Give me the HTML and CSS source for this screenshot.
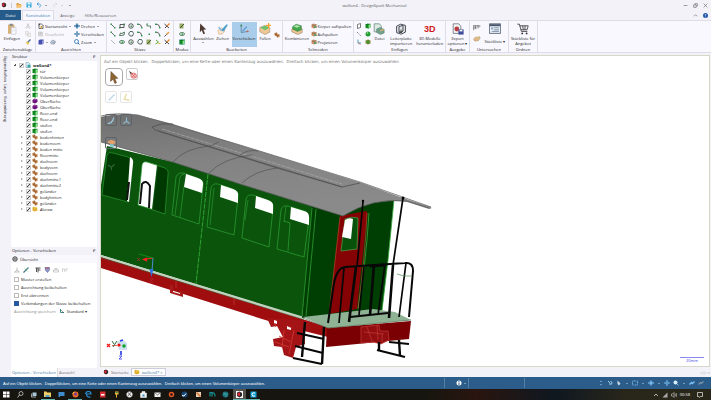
FILE: index.html
```html
<!DOCTYPE html>
<html lang="de">
<head>
<meta charset="utf-8">
<title>waGon4 - DesignSpark Mechanical</title>
<link rel="stylesheet" href="styles.css">
</head>
<body>
<svg class="defs" aria-hidden="true">
  <symbol id="line" viewBox="0 0 12 12"><path d="M2 2L10 10" stroke="#2d4a3d" stroke-width="1.6"/><path d="M1 1h3v3H1zM8 8h3v3H8z" fill="#3c8d4c"/></symbol>
  <symbol id="rect" viewBox="0 0 12 12"><path d="M2 3h8v6H2z" fill="none" stroke="#333" stroke-width="1.6"/><path d="M0 8h3v3H0zM9 1h3v3H9z" fill="#3c8d4c"/></symbol>
  <symbol id="circ" viewBox="0 0 12 12"><circle cx="6" cy="6" r="4.5" fill="none" stroke="#333" stroke-width="1.6"/><path d="M5 5h3v3H5z" fill="#3c9d4c"/></symbol>
  <symbol id="hex" viewBox="0 0 12 12"><path d="M4 1h5l2 4-2 5H4L1 6z" fill="none" stroke="#2d4a3d" stroke-width="1.6"/></symbol>
  <symbol id="arc" viewBox="0 0 12 12"><path d="M1 3q8-2 8 7" fill="none" stroke="#333" stroke-width="1.6"/><path d="M0 1h3v3H0zM8 8h3v3H8z" fill="#3c9d4c"/></symbol>
  <symbol id="step" viewBox="0 0 12 12"><path d="M2 2v4h7v5" fill="none" stroke="#3b6d4b" stroke-width="1.6"/><path d="M1 1h3v2H1z" fill="#3c9d4c"/></symbol>
  <symbol id="cut" viewBox="0 0 12 12"><path d="M1 2l9 8M10 2L2 10" stroke="#333" stroke-width="1.8"/><path d="M6 6l5-5" stroke="#e98322" stroke-width="2.4"/></symbol>
  <symbol id="dot" viewBox="0 0 12 12"><path d="M5 5h3v3H5z" fill="#2f9c48"/></symbol>
  <symbol id="pen" viewBox="0 0 12 12"><path d="M1 11L9 3" stroke="#50555c" stroke-width="2"/><path d="M5 7l5-5" stroke="#ef9a3a" stroke-width="3"/></symbol>
  <symbol id="ell" viewBox="0 0 12 12"><ellipse cx="6" cy="6" rx="5" ry="3" fill="none" stroke="#2e6b3e" stroke-width="1.6"/><path d="M5 5h3v3H5z" fill="#3c9d4c"/></symbol>
  <symbol id="poly" viewBox="0 0 12 12"><path d="M1 9l2-5 3 1 5-3-1 6-6 1z" fill="none" stroke="#2e5b3e" stroke-width="1.6"/></symbol>
  <symbol id="sketch" viewBox="0 0 12 12"><path d="M1 1h8v10H1z" fill="#9cae65"/><path d="M2 10l8-8" stroke="#415938" stroke-width="2"/></symbol>
  <symbol id="tri" viewBox="0 0 12 12"><path d="M2 2l5 4-6 4" fill="none" stroke="#5da53a" stroke-width="2"/><path d="M7 9h4" stroke="#e2b12d" stroke-width="2"/></symbol>
  <symbol id="cube" viewBox="0 0 12 12"><path d="M1 3l4-2 6 1v7l-4 2-6-1z" fill="#118c20"/><path d="M1 3l6 1 4-2M7 4v7" fill="none" stroke="#075d10"/><path d="M7 4l4-2v7l-4 2z" fill="#8ee394"/></symbol>
  <symbol id="surface" viewBox="0 0 12 12"><path d="M1 4l4-3 6 2v5l-5 3-5-2z" fill="#6c1279"/><path d="M3 4l4-1 2 2" fill="none" stroke="#ce87d8"/></symbol>
  <symbol id="part" viewBox="0 0 12 12"><path d="M1 2l4-1 3 3 3 1v5l-4 1-3-3-3-1z" fill="#c98a52"/><path d="M1 4l6 3 4-1M5 1l-1 6M7 7v4" fill="none" stroke="#7a4a24"/></symbol>
  <symbol id="folder" viewBox="0 0 12 12"><path d="M1 3l3-2 1 1h5l1 7-6 2-4-2z" fill="#e0b030"/><path d="M4 4l6-1" stroke="#fff0a8"/></symbol>
  <symbol id="doc" viewBox="0 0 12 12"><path d="M2 1h5l3 3v7H2z" fill="#e7f2f8" stroke="#4b8297"/><path d="M5 6l3-1 3 2v4H5z" fill="#37a4a8"/></symbol>
  <symbol id="home" viewBox="0 0 12 12"><path d="M1 6l5-5 5 5M2 5v6h8V5" fill="none" stroke="#444" stroke-width="1.5"/><path d="M5 6h3v5H5z" fill="#d5a43c"/><path d="M1 1h3v3H1z" fill="#444"/></symbol>
  <symbol id="lens" viewBox="0 0 12 12"><circle cx="5" cy="5" r="4" fill="#eef8ff" stroke="#286aa8" stroke-width="1.6"/><path d="M8 8l3 3" stroke="#286aa8" stroke-width="2"/></symbol>
  <symbol id="pan" viewBox="0 0 12 12"><path d="M6 1v10M1 6h10" stroke="currentColor" stroke-width="1.6"/><path d="M6 0l2 3H4zM6 12l2-3H4zM0 6l3-2v4zM12 6L9 4v4z" fill="currentColor"/></symbol>
  <symbol id="orbit" viewBox="0 0 12 12"><path d="M6 0v12M1 5q5-3 10 0v2q-5 3-10 0z" fill="none" stroke="currentColor" stroke-width="1.5"/><circle cx="6" cy="6" r="2.5" fill="currentColor"/></symbol>
  <symbol id="page" viewBox="0 0 12 12"><path d="M1 2h8v8H1z" fill="#ddd" stroke="#bbb"/><path d="M3 4h4M3 6h4" stroke="#aaa"/></symbol>
  <symbol id="view" viewBox="0 0 12 12"><path d="M1 3l3-2h7v8l-3 2H1z" fill="#454fae"/><path d="M8 4v7l3-2V1z" fill="#8f9cd8"/></symbol>
  <symbol id="iso" viewBox="0 0 12 12"><path d="M1 7l4-5 6 3-2 5H3z" fill="#cbd2dc" stroke="#616b78"/><path d="M4 6l3 2 2-3" fill="none" stroke="#3d79b4"/></symbol>
  <symbol id="paste" viewBox="0 0 24 30"><path d="M2 4h16v23H2z" fill="#d9b27a"/><path d="M6 2h8v5H6z" fill="#80868c"/><path d="M10 11h12v17H10z" fill="#fafcff" stroke="#99a5b8"/><path d="M12 16h8M12 20h8" stroke="#c4ccd6"/></symbol>
  <symbol id="scissors" viewBox="0 0 12 12"><path d="M4 1l4 7M8 1L4 8" stroke="#bbb" stroke-width="1.4"/><circle cx="3" cy="9" r="1.6" fill="none" stroke="#bbb"/><circle cx="9" cy="9" r="1.6" fill="none" stroke="#bbb"/></symbol>
  <symbol id="copy" viewBox="0 0 12 12"><path d="M1 1h6v7H1zM5 4h6v7H5z" fill="#eee" stroke="#ccc"/></symbol>
  <symbol id="brush" viewBox="0 0 12 12"><path d="M1 7l5-3 3 4-3 4z" fill="#e8cc58"/><path d="M6 6l5-5" stroke="#4c6a98" stroke-width="2.4"/></symbol>
  <symbol id="cursor" viewBox="0 0 24 30"><path d="M5 1l15 15-7 1 4 9-4 2-4-10-5 5z" fill="#4d3a30"/></symbol>
  <symbol id="pull" viewBox="0 0 30 30"><path d="M2 18l10-6 8 8-7 8H4z" fill="#f4e3cf" stroke="#d28d56"/><path d="M10 18L24 3l3 2-10 16z" fill="#4f9fc9"/><path d="M4 10l8 9" stroke="#8dbbd5" stroke-width="4"/></symbol>
  <symbol id="move" viewBox="0 0 30 30"><path d="M8 24V5M8 24l16-3" stroke="#59869d" stroke-width="2"/><path d="M8 2l3 6H5z" fill="#3f8c5f"/><path d="M28 21l-6-3v6z" fill="#ca5c55"/><path d="M11 21l11-12" stroke="#5b93cf" stroke-width="3"/></symbol>
  <symbol id="fill" viewBox="0 0 30 30"><path d="M2 11l13-5 12 6v11l-12 6-13-7z" fill="#edc896" stroke="#80613c"/><path d="M3 11l12-4 11 5-11 6z" fill="#6cc36f"/><path d="M24 0v13M18 6h12" stroke="#f2a12c" stroke-width="3"/></symbol>
  <symbol id="combine" viewBox="0 0 30 30"><path d="M2 15l10-5 16 5v9l-11 5-15-7z" fill="#ecc594" stroke="#6c5237"/><path d="M4 9l9-6 13 4v10l-10 4L4 15z" fill="#43a84c" stroke="#2a6034"/><path d="M6 9l8-4 9 3-8 4z" fill="#b0e4ae"/></symbol>
  <symbol id="split" viewBox="0 0 12 12"><path d="M1 3l4-2 6 2v6l-5 2-5-2z" fill="#d18a65"/><path d="M2 4l5 1 4-2" stroke="#3f7559" fill="none"/><path d="M6 6h5v4H6z" fill="#679969"/></symbol>
  <symbol id="file" viewBox="0 0 30 30"><path d="M3 2h13l5 6v14H3z" fill="#dcebe1" stroke="#6c8b85" stroke-width="2"/><path d="M9 15l9-4 10 5v9l-9 4-10-5z" fill="#73a08b" stroke="#476b61"/><path d="M18 20l9-4" stroke="#dfb372" stroke-width="3"/></symbol>
  <symbol id="board" viewBox="0 0 30 30"><path d="M4 8l10-5 12 3v17l-11 5-11-4zM10 9l10-3v14l-10 4z" fill="#e7e8ea" stroke="#3f4650" stroke-width="2.4"/><path d="M15 16v9M15 25l-4-4M15 25l4-4" stroke="#333" stroke-width="2"/></symbol>
  <symbol id="export" viewBox="0 0 30 30"><path d="M3 2h14l5 6v18H3z" fill="#f2f5f5" stroke="#6a7278" stroke-width="2"/><circle cx="12" cy="15" r="6" fill="#bb3e40"/><path d="M16 16h13v13H16z" fill="#414c99"/><path d="M19 17h7v4h-7z" fill="#fff"/></symbol>
  <symbol id="measure" viewBox="0 0 24 18"><path d="M2 2v15M8 2v12M15 2v10M2 4h20M2 10h8" stroke="#555" stroke-width="2" fill="none"/><path d="M16 7h6" stroke="#888" stroke-width="2"/></symbol>
  <symbol id="hand" viewBox="0 0 24 18"><path d="M2 10l7-6 4 2 5-4 4 5-5 8-8 2-6-2z" fill="#e0bc86" stroke="#90724c"/></symbol>
  <symbol id="list" viewBox="0 0 30 30"><path d="M1 2h28v24H1z" fill="#eceff4" stroke="#46556b" stroke-width="2"/><path d="M2 3h26v5H2z" fill="#46556b"/><path d="M5 11h6v5H5z" fill="#86a9cf"/><path d="M13 12h12M13 17h12M7 21h18" stroke="#667d9a" stroke-width="2"/></symbol>
  <symbol id="cart" viewBox="0 0 30 30"><path d="M1 3h5l5 18h15M7 7h21l-3 10H10M14 7l2 10M20 7v10" fill="none" stroke="#3d3d3d" stroke-width="2.2"/><circle cx="13" cy="26" r="2.4" fill="#333"/><circle cx="24" cy="26" r="2.4" fill="#333"/></symbol>
  <symbol id="logo" viewBox="0 0 14 14"><path d="M0 0h14v14H0z" fill="#fff"/><path d="M2 3l5-2 5 3v6l-5 3-5-3z" fill="#30262a"/><path d="M3 4l5-1v7l-5-1z" fill="#d7283a"/></symbol>
  <symbol id="gear" viewBox="0 0 12 12"><circle cx="6" cy="6" r="4.6" fill="#bbb" stroke="#444" stroke-width="1.6"/><path d="M4 3v6M8 3v6M3 6h6" stroke="#555"/></symbol>
</svg>

<header class="titlebar">
  <nav class="quick" aria-label="Schnellzugriff">
    <svg class="i"><use href="#logo"/></svg><span class="bar"></span>
    <button aria-label="Öffnen"><svg class="i" viewBox="0 0 12 12"><path d="M1 2h4l1 2h4v7H1z" fill="#e2a047"/><path d="M3 6h9l-2 5H1z" fill="#f6c674"/></svg></button>
    <button aria-label="Speichern"><svg class="i" viewBox="0 0 12 12"><path d="M1 1h10v10H1z" fill="#31a8d8"/><path d="M3 1h6v4H3zM4 7h4v4H4z" fill="#def3fb"/></svg></button>
    <button aria-label="Rückgängig"><svg class="i" viewBox="0 0 12 12"><path d="M2 4h5q5 2 0 7M5 1L2 4l3 3" fill="none" stroke="#4a9fdc" stroke-width="1.8"/></svg><i class="drop"></i></button>
    <button aria-label="Wiederholen"><svg class="i" viewBox="0 0 12 12"><path d="M10 4H5q-5 2 0 7M7 1l3 3-3 3" fill="none" stroke="#d8d9de" stroke-width="1.6"/></svg><i class="drop pale"></i></button>
    <i class="drop"></i>
  </nav>
  <h1>waGon4 - DesignSpark Mechanical</h1>
  <div class="window">
    <button aria-label="Minimieren"><svg class="w" viewBox="0 0 8 8"><path d="M1 4h6" stroke="#666"/></svg></button>
    <button aria-label="Wiederherstellen"><svg class="w" viewBox="0 0 8 8"><path d="M1 3h4v4H1zM3 3V1h4v4H5" fill="none" stroke="#666"/></svg></button>
    <button aria-label="Schließen"><svg class="w" viewBox="0 0 8 8"><path d="M1 1l6 6M7 1L1 7" stroke="#666"/></svg></button>
  </div>
</header>
<nav class="tabs">
  <button class="file">Datei</button><button class="active">Konstruktion</button><button>Anzeige</button><button>Hilfe/Ressourcen</button>
  <span class="help"><svg class="w" viewBox="0 0 8 8"><path d="M1 5l3-2 3 2" fill="none" stroke="#777"/></svg><svg class="w" viewBox="0 0 8 8"><circle cx="4" cy="4" r="4" fill="#2456a8"/><path d="M3 3q1-2 2 0l-1 1v1M4 6v1" fill="none" stroke="#fff"/></svg></span>
</nav>

<section class="ribbon">
  <div class="group">
    <div class="tools">
      <button class="big"><svg class="b"><use href="#paste"/></svg>Einfügen</button>
      <div class="stack"><button aria-label="Ausschneiden"><svg class="i"><use href="#scissors"/></svg></button><button aria-label="Kopieren"><svg class="i"><use href="#copy"/></svg></button><button aria-label="Format übertragen"><svg class="i"><use href="#brush"/></svg></button></div>
    </div><h2>Zwischenablage</h2>
  </div>
  <div class="group">
    <div class="tools pair">
      <div class="stack"><button><svg class="i"><use href="#home"/></svg>Startansicht<i class="drop"></i></button><button class="off"><svg class="i"><use href="#page"/></svg>Draufsicht</button><button aria-label="Ansichten"><svg class="i"><use href="#view"/></svg><i class="drop"></i><svg class="i"><use href="#iso"/></svg></button></div>
      <div class="stack blue"><button><svg class="i"><use href="#orbit"/></svg><span>Drehen</span><i class="drop"></i></button><button><svg class="i"><use href="#pan"/></svg><span>Verschieben</span></button><button><svg class="i"><use href="#lens"/></svg><span>Zoom</span><i class="drop"></i></button></div>
    </div><h2>Ausrichten</h2>
  </div>
  <div class="group">
    <div class="tools sketch">
      <button aria-label="Linie"><svg class="i"><use href="#line"/></svg></button><button aria-label="Rechteck"><svg class="i"><use href="#rect"/></svg></button><button aria-label="Kreis"><svg class="i"><use href="#circ"/></svg></button><button aria-label="Bogen"><svg class="i"><use href="#arc"/></svg></button><button aria-label="Spline"><svg class="i"><use href="#step"/></svg></button><button aria-label="Ecke"><svg class="i"><use href="#arc"/></svg></button><button aria-label="Trimmen"><svg class="i"><use href="#cut"/></svg></button>
      <button aria-label="Tangente"><svg class="i"><use href="#line"/></svg></button><button aria-label="Dreipunkt-Rechteck"><svg class="i"><use href="#poly"/></svg></button><button aria-label="Vieleck"><svg class="i"><use href="#hex"/></svg></button><button aria-label="Tangentenbogen"><svg class="i"><use href="#arc"/></svg></button><button aria-label="Punkt"><svg class="i"><use href="#dot"/></svg></button><button aria-label="Versatz"><svg class="i"><use href="#arc"/></svg></button><button aria-label="Teilen"><svg class="i"><use href="#pen"/></svg></button>
      <button aria-label="Hilfslinie"><svg class="i" viewBox="0 0 12 12"><path d="M2 2l8 8" stroke="#444" stroke-dasharray="2 1"/></svg></button><button aria-label="Ellipse"><svg class="i"><use href="#ell"/></svg></button><button aria-label="Dreipunktkreis"><svg class="i"><use href="#circ"/></svg></button><button aria-label="Schwenkbogen"><svg class="i"><use href="#hex"/></svg></button><button aria-label="Flächenkurve"><svg class="i"><use href="#sketch"/></svg></button><button aria-label="Projizieren"><svg class="i"><use href="#tri"/></svg></button><button aria-label="Biegen"><svg class="i"><use href="#cut"/></svg></button>
    </div><h2>Skizze</h2>
  </div>
  <div class="group">
    <div class="tools"><div class="stack"><button aria-label="Skizzenmodus"><svg class="i"><use href="#sketch"/></svg></button><button aria-label="Schnittmodus"><svg class="i"><use href="#ell"/></svg></button><button class="on" aria-label="3D-Modus"><svg class="i"><use href="#cube"/></svg></button></div></div><h2>Modus</h2>
  </div>
  <div class="group">
    <div class="tools edit">
      <button class="big"><svg class="b"><use href="#cursor"/></svg>Auswählen<i class="drop"></i></button><button class="big"><svg class="b"><use href="#pull"/></svg>Ziehen</button><button class="big on"><svg class="b"><use href="#move"/></svg>Verschieben</button><button class="big"><svg class="b"><use href="#fill"/></svg>Füllen</button><button class="mid" aria-label="Verrundung"><svg class="i"><use href="#part"/></svg></button>
    </div><h2>Bearbeiten</h2>
  </div>
  <div class="group">
    <div class="tools">
      <button class="big"><svg class="b"><use href="#combine"/></svg>Kombinieren</button>
      <div class="stack"><button><svg class="i"><use href="#split"/></svg>Körper aufspalten</button><button><svg class="i"><use href="#split"/></svg>Aufspalten</button><button><svg class="i"><use href="#split"/></svg>Projizieren</button></div>
    </div><h2>Schneiden</h2>
  </div>
  <div class="group">
    <div class="tools">
      <div class="stack"><button aria-label="Ebene"><svg class="i" viewBox="0 0 12 12"><path d="M3 3l6-2v8l-6 2z" fill="#fff" stroke="#444" stroke-width="1.4"/></svg></button><button aria-label="Achse"><svg class="i" viewBox="0 0 12 12"><path d="M2 2l8 8" stroke="#333" stroke-dasharray="3 1"/></svg></button><button aria-label="Ursprung"><svg class="i" viewBox="0 0 12 12"><path d="M4 1v7h6" fill="none" stroke="#2685a2" stroke-width="1.6"/><path d="M4 8l5 3" stroke="#c33"/></svg></button></div>
      <div class="stack"><button aria-label="Zylinder"><svg class="i"><use href="#cube"/></svg></button><button aria-label="Kugel"><svg class="i" viewBox="0 0 12 12"><circle cx="6" cy="6" r="5" fill="#239a34"/><circle cx="5" cy="4" r="1.6" fill="#b5ebb0"/></svg></button><button aria-label="Lochmuster"><svg class="i" viewBox="0 0 12 12"><path d="M1 3l5-2 5 2v6l-5 2-5-2z" fill="#82893b"/><circle cx="6" cy="6" r="2.6" fill="#2e9a38"/></svg></button></div>
      <button class="big"><svg class="b"><use href="#file"/></svg>Datei</button><button class="big"><svg class="b"><use href="#board"/></svg>Leiterplatte importieren</button><button class="big"><b class="three">3D</b>3D-Modelle herunterladen</button>
    </div><h2>Einfügen</h2>
  </div>
  <div class="group"><div class="tools"><button class="big"><svg class="b"><use href="#export"/></svg>Export optionen ▾</button></div><h2>Ausgabe</h2></div>
  <div class="group"><div class="tools">
    <div class="stack two"><button aria-label="Messen"><svg class="m"><use href="#measure"/></svg></button><button aria-label="Masse"><svg class="m"><use href="#hand"/></svg></button></div>
    <button class="big low"><svg class="b"><use href="#list"/></svg>Stückliste ▾</button>
  </div><h2>Untersuchen</h2></div>
  <div class="group"><div class="tools"><button class="big"><svg class="b"><use href="#cart"/></svg>Stückliste für Angebot</button></div><h2>Ordnen</h2></div>
</section>

<main class="main">
  <aside class="rail"><span>Eigenschaften</span><span>Layer</span><span>Kurzanleitung</span></aside>
  <aside class="side">
    <section class="structure">
      <h3>Struktur<span>₽</span></h3>
      <ul class="tree">
        <li class="root"><i class="open"></i><label><input type="checkbox" checked><svg class="t"><use href="#doc"/></svg>waGon4*</label></li>
        <li><label><input type="checkbox" checked><svg class="t"><use href="#cube"/></svg>tür</label></li>
        <li><label><input type="checkbox" checked><svg class="t"><use href="#cube"/></svg>Volumenkörper</label></li>
        <li><label><input type="checkbox" checked><svg class="t"><use href="#cube"/></svg>Volumenkörper</label></li>
        <li><label><input type="checkbox" checked><svg class="t"><use href="#cube"/></svg>Volumenkörper</label></li>
        <li><label><input type="checkbox" checked><svg class="t"><use href="#cube"/></svg>Volumenkörper</label></li>
        <li><label><input type="checkbox" checked><svg class="t"><use href="#surface"/></svg>Oberfläche</label></li>
        <li><label><input type="checkbox" checked><svg class="t"><use href="#surface"/></svg>Oberfläche</label></li>
        <li><label><input type="checkbox" checked><svg class="t"><use href="#cube"/></svg>floor-end</label></li>
        <li><label><input type="checkbox" checked><svg class="t"><use href="#cube"/></svg>floor-end</label></li>
        <li><label><input type="checkbox" checked><svg class="t"><use href="#cube"/></svg>stufen</label></li>
        <li><label><input type="checkbox" checked><svg class="t"><use href="#cube"/></svg>stufen</label></li>
        <li><i></i><label><input type="checkbox" checked><svg class="t"><use href="#part"/></svg>bodenhinten</label></li>
        <li><i></i><label><input type="checkbox" checked><svg class="t"><use href="#part"/></svg>bodenvorn</label></li>
        <li><i></i><label><input type="checkbox" checked><svg class="t"><use href="#part"/></svg>boden mitte</label></li>
        <li><i></i><label><input type="checkbox" checked><svg class="t"><use href="#part"/></svg>floormitte</label></li>
        <li><i></i><label><input type="checkbox" checked><svg class="t"><use href="#part"/></svg>dachvorn</label></li>
        <li><i></i><label><input type="checkbox" checked><svg class="t"><use href="#part"/></svg>bodyvorn</label></li>
        <li><i></i><label><input type="checkbox" checked><svg class="t"><use href="#part"/></svg>dachvorn</label></li>
        <li><i></i><label><input type="checkbox" checked><svg class="t"><use href="#part"/></svg>dachmitte1</label></li>
        <li><i></i><label><input type="checkbox" checked><svg class="t"><use href="#part"/></svg>dachmitte2</label></li>
        <li><i></i><label><input type="checkbox" checked><svg class="t"><use href="#part"/></svg>geländer</label></li>
        <li><i></i><label><input type="checkbox" checked><svg class="t"><use href="#part"/></svg>bodyhinten</label></li>
        <li><i></i><label><input type="checkbox" checked><svg class="t"><use href="#part"/></svg>geländer</label></li>
        <li><i></i><label class="italic"><input type="checkbox" checked><svg class="t"><use href="#folder"/></svg>Alurow</label></li>
      </ul>
    </section>
    <section class="options">
      <h3>Optionen - Verschieben<span>₽</span></h3>
      <h4><svg class="i"><use href="#gear"/></svg>Übersicht</h4>
      <div class="icons">
        <button aria-label="Anker"><svg class="i" viewBox="0 0 12 12"><path d="M1 11l5-5V1M6 6l5 4H1" fill="none" stroke="#aaa" stroke-width="1.4"/></svg></button>
        <button aria-label="Ausrichten"><svg class="i" viewBox="0 0 12 12"><path d="M1 11L11 1" stroke="#487b83" stroke-width="2.4"/><path d="M3 3l6 6" stroke="#4f9e57"/></svg></button>
        <button class="gap" aria-label="Lineal"><svg class="i" viewBox="0 0 12 12"><path d="M1 2h10M3 2v8M6 2v9M6 6h5" stroke="#444" stroke-width="1.8"/></svg></button>
        <button aria-label="Bis"><svg class="i" viewBox="0 0 12 12"><path d="M2 1h9v5l-4 5-4-4z" fill="#8f97cb" stroke="#4c568c"/><path d="M3 2h7" stroke="#ba5252" stroke-width="2"/></svg></button>
        <button aria-label="Form"><svg class="i" viewBox="0 0 12 12"><path d="M1 6h10v4H1zM4 6V3h4v3" fill="none" stroke="#999"/></svg></button>
        <button aria-label="Maß"><svg class="i" viewBox="0 0 12 12"><path d="M1 3v7M1 4h4v5M8 3v7M8 4h4" fill="none" stroke="#aaa"/></svg></button>
      </div>
      <label><input type="checkbox">Muster erstellen</label>
      <label><input type="checkbox">Ausrichtung beibehalten</label>
      <label><input type="checkbox">Erst abtrennen</label>
      <label><input type="checkbox" class="fill" checked>Verbindungen der Skizze beibehalten</label>
      <div class="save"><span>Ausrichtung speichern</span><button><svg class="i" viewBox="0 0 12 12"><path d="M3 2v7h7" fill="none" stroke="#287e75" stroke-width="1.8"/><path d="M4 4l6 6" stroke="#444"/></svg>Standard ▾</button></div>
      <nav class="foot"><button class="active">Optionen - Verschieben</button><button>Auswahl</button></nav>
    </section>
  </aside>

  <section class="work">
    <div class="canvas">
      <svg class="model" viewBox="101 56 608 310" preserveAspectRatio="xMinYMin meet" role="img" aria-label="Waggonmodell">
        <defs><linearGradient id="roof" x1="0" y1="0" x2="0.3" y2="1"><stop offset="0" stop-color="#707070"/><stop offset=".5" stop-color="#838383"/><stop offset="1" stop-color="#8a8a8a"/></linearGradient></defs>
        <!-- underframe -->
        <path d="M101 257L328 327V337L300 330L272 322L262 319L101 268z" fill="#a00d0f"/>
        <path d="M267 318l4 9 6-1 6 11-10 2 1 7 8 1 2 8 9 3 3-11 9-3-1-15 6 2-1-10z" fill="#a41416"/>
        <path d="M274 323l2 4M289 327l3 1M275 342l14 5M279 336l12 6M284 330l-2 18M294 330l-5 24" stroke="#d13a35" stroke-width=".8"/>
        <path d="M274 320l3 1v3l-3-1zM287 326l4 2v2l-4-1z" fill="#fff"/>
        <path d="M170 284v9l13 4v-5l-3-1v3l-7-2v-6z" fill="#a91c1c"/>
        <path d="M176 281v7M234 298v7" stroke="#c44" stroke-width=".6"/>
        <!-- side wall -->
        <path d="M101 185L107 146L173 162L343 214L312 240L302 317L101 255z" fill="#0a540c"/>
        <path d="M101 256L304 318" stroke="#c1d3c0" stroke-width="2"/><path d="M101 257.500L304 319.500" stroke="#39703c" stroke-width=".6"/>
        <!-- end wall -->
        <path d="M312 207L343 214L370 202L394 199L388 260L382 311L302 318z" fill="#003f03"/>
        <path d="M312 208L302 316M316 209L306 316" stroke="#268a2a" stroke-width="1"/>
        <path d="M394 200L388 260L382 310M369 213q-3 50-11 96" fill="none" stroke="#35a639" stroke-width=".8"/>
        <!-- windows -->
        <path d="M107 155q2-4 6-2l15 4q4 1 4 6l-4 39-26-7z" fill="#003a02" stroke="#2b9930" stroke-width=".7"/>
        <path d="M130 157q4 2 3 7l-4 38-2-1z" fill="#fff"/>
        <path d="M138 205L142 165q1-4 5-3l10 3-5 44z" fill="#fff"/>
        <path d="M158 166l7 2q4 2 3 7l-3 39-12-4z" fill="#003a02"/>
        <path d="M138 205L142 165q1-4 5-3l18 6q4 2 3 7l-3 39z" fill="none" stroke="#2b9930" stroke-width=".7"/>
        <path d="M129 182l-2 18M140 204l2-20q4-5 8 2l-1 22" fill="none" stroke="#111" stroke-width="2"/>
        <g>
          <path d="M172 215L176 177q2-5 8-4l15 6q5 2 4 7l-4 38z" fill="none" stroke="#2b9930" stroke-width=".8"/><path d="M175 215l5-38q1-3 5-3M180 218l4-32" stroke="#2b9930" stroke-width=".7" fill="none"/><path d="M186 174l12 4q6 2 5 7l-1 8-18-6z" fill="#fff"/>
          <path d="M207 227L211 188q1-5 7-4l15 5q6 2 5 8l-4 38z" fill="none" stroke="#2b9930" stroke-width=".8"/><path d="M221 185l12 4q6 2 5 7v7l-18-6z" fill="#fff"/><path d="M210 225l4-37" stroke="#2b9930" stroke-width=".7"/>
          <path d="M242 238L246 199q1-5 7-4l16 6q5 2 4 8l-4 38z" fill="none" stroke="#2b9930" stroke-width=".8"/><path d="M256 196l12 4q6 2 5 7v7l-18-6z" fill="#fff"/><path d="M245 220l3-20" stroke="#2b9930" stroke-width=".7"/>
          <path d="M277 249L281 210q1-5 7-4l16 5q5 2 5 8l-5 38zM288 251l2-28-6-2" fill="none" stroke="#2b9930" stroke-width=".8"/><path d="M291 207l13 4q5 1 5 6v8l-19-6z" fill="#fff"/><path d="M286 206l-2 16" stroke="#2b9930" stroke-width=".7"/>
        </g>
        <path d="M208 174L196 284" stroke="#35ad38" stroke-width=".9" stroke-dasharray="5 1"/>
        <!-- door -->
        <path d="M340 216L366 211q2 1 1 5L357 309L329 314z" fill="#850205"/>
        <path d="M345 219q7-3 13-1l-1 31-16 2z" fill="#07510b" stroke="#52a348" stroke-width=".7"/><path d="M345 220q4-3 8-1l-2 20-9-2z" fill="#fff"/>
        <path d="M340 217l-11 97M367 213q-2 45-9 95" stroke="#cc4e30" stroke-width=".6" fill="none"/>
        <!-- platform -->
        <path d="M303 317L373 309L395 312L411 320L328 328z" fill="#8fb295"/>
        <path d="M327 328L411 321L409 339L326 347z" fill="#7b0003"/><path d="M303 318L328 328L411 320" fill="none" stroke="#5d7e62" stroke-width=".8"/>
        <path d="M361 327l18-2 1 6h8l1 9-8 4-8-2-12 1z" fill="#920e10" stroke="#c33a36" stroke-width=".7"/><path d="M364 332l20 2M367 327l5 14M377 325l1 15M382 334v8" stroke="#c33a36" stroke-width=".7"/>
        <!-- roof -->
        <path d="M101 117q15-4 37-2L173 124L240 145L362 183L403 198L431 207q1 2-2 2L407 202Q373 197 343 216L240 184L173 162L101 142z" fill="url(#roof)"/>
        <path d="M101 142L173 162L240 184L343 216Q373 197 407 201L429 208" fill="none" stroke="#5c5c5c" stroke-width=".8"/>
        <path d="M101 116q15-4 37-1L240 145L360 182L431 207" fill="none" stroke="#6a6a6a" stroke-width=".8"/>
        <path d="M173 124l-12 0-9 3 3 3L210 147L277 168L342 187L360 183" fill="none" stroke="#505050" stroke-width=".8"/><path d="M162 129L342 184" stroke="#aaa" stroke-width=".7" stroke-dasharray="4 1"/><path d="M158 131L342 187" stroke="#505050" stroke-width=".7"/>
        <path d="M173 162q12-14 37-16M209 173q14-15 43-18M242 183q12-12 35-15M210 146l9-4M240 155q8-6 18-4" fill="none" stroke="#4c4c4c" stroke-width=".6"/>
        <!-- posts, railing and steps -->
        <g fill="none" stroke="#080808">
          <path d="M363 202l-6 65M403 198l-10 67" stroke-width="1.700"/>
          <path d="M328 323l6-40q3-15 11-16l60-4q8-1 8 8l-4 46M350 317l38-4" stroke-width="2"/>
          <path d="M344 268l-5 55M364 267l-5 48M385 264l-7 51M406 263l-7 54" stroke-width="1.700"/>
          <path d="M356 267l-7 55M374 265l-4 50M393 265l-4 53" stroke-width="2.600"/>
          <path d="M370 266l14-1" stroke-width="3"/>
          <path d="M305 322l-3 35M324 327l-2 37M399 340l1 16M379 342v8" stroke-width="2.400"/>
          <path d="M297 333l27 6M295 346l28 7M293 358l29 6M377 350l28 7M389 342l20 2" stroke-width="2.200"/>
        </g>
        <path d="M397 274q7 3 14 2" fill="none" stroke="#52945c" stroke-width=".7"/>
        <circle cx="363" cy="201" r="1.200"/><circle cx="403" cy="198" r="1.500"/>
        <!-- move handle -->
        <path d="M153 258L143 259.500" stroke="#f22" stroke-width="1.200"/><path d="M142 259.500l5-2v4z" fill="#f22"/><path d="M153 258l-14-4" stroke="#118c18"/><path d="M153 258l-1 13" stroke="#528bd0"/><path d="M151.500 277l-2-8h4z" fill="#3372e5"/><path d="M137 258l3 3M140 258l-3 3M150 279h3l-3 3h3" fill="none" stroke="#b42835" stroke-width=".7"/>
        <!-- world axes -->
        <g fill="none"><path d="M107 344l3 3M110 344l-3 3" stroke="#f01515" stroke-width="1.200"/><path d="M112 345.500h5" stroke="#e66"/><path d="M112 341l2 3M117 341l-4 6" stroke="#286d33"/><path d="M117 342l6-2 4 3v7h-8z" fill="#cce1ed"/><path d="M120 341l3-1M121 351v4" stroke="#2536e8" stroke-width="1.600"/><path d="M119 356h3l-3 3h3" stroke="#33e" stroke-width=".8"/></g><circle cx="119" cy="345" r="1.600" fill="#e11"/><circle cx="124" cy="346" r="1.800" fill="#15a331"/>
      </svg>
      <p class="hint">Auf ein Objekt klicken.&nbsp; Doppelklicken, um eine Kette oder einen Kantenzug auszuwählen.&nbsp; Dreifach klicken, um einen Volumenkörper auszuwählen</p>
      <div class="palette">
        <button class="lead" aria-label="Auswahl"><svg viewBox="0 0 24 30"><path d="M5 1l16 16-7 1 4 9-4 2-4-10-6 5z" fill="#8d6532" stroke="#50391b"/></svg></button>
        <button aria-label="Auswahl erweitern"><svg viewBox="0 0 12 12"><path d="M1 1l6 4-3 1z" fill="#333"/><path d="M4 5l4-1 3 2v4l-4 1-3-2zM5 5l5 5M10 5l-5 5" fill="#f8cdcb" stroke="#d14f4e"/></svg></button>
        <button class="ghost" aria-label="Richtung"><svg viewBox="0 0 12 12"><path d="M2 10l8-8" stroke="#7fb2d0" stroke-width="2"/></svg></button>
        <button class="ghost" aria-label="Entlang"><svg viewBox="0 0 12 12"><path d="M6 1L3 8l7 2" fill="none" stroke="#d6c15b" stroke-width="2"/></svg></button>
        <button class="dark" aria-label="Kurve"><svg viewBox="0 0 12 12"><path d="M1 10q6 0 8-8" fill="none" stroke="#9bcbe5" stroke-width="1.500"/></svg></button>
        <button class="dark" aria-label="Drehpunkt"><svg viewBox="0 0 12 12"><path d="M6 2v5L2 10M6 7l4 3" fill="none" stroke="#8cbbd4" stroke-width="1.500"/></svg></button>
        <button class="dark" aria-label="Bis"><svg viewBox="0 0 12 12"><path d="M1 3l5-2 5 2v3l-5 1-5-2z" fill="#e1a16d"/><path d="M4 7h5v4H4z" fill="#83cad2"/></svg></button><span></span>
        <button class="faint" aria-label="Lineal"><svg viewBox="0 0 12 12"><path d="M1 4l5 3 4-4M6 7v4" fill="none" stroke="#65906c" stroke-width="1.500"/></svg></button>
      </div>
      <span class="scale">20mm</span>
    </div>
    <nav class="docs"><button><svg class="t"><use href="#logo"/></svg>Startseite</button><button class="active"><svg class="t"><use href="#folder"/></svg>waGon4* ×</button><span>◁ ▷ ×</span></nav>
  </section>
</main>

<div class="status">
  <p>Auf ein Objekt klicken.&nbsp; Doppelklicken, um eine Kette oder einen Kantenzug auszuwählen.&nbsp; Dreifach klicken, um einen Volumenkörper auszuwählen.</p>
  <div class="info"><svg class="i" viewBox="0 0 12 12"><circle cx="6" cy="6" r="5" fill="#fff"/><path d="M6 2v2M6 5v5" stroke="#2b5c8a" stroke-width="2"/></svg><i class="drop"></i></div>
  <div class="cell"></div>
  <div class="viewtools">
    <svg class="i" viewBox="0 0 12 12"><path d="M6 1l2 3H4zM6 11l2-3H4z" fill="#8db6d8"/></svg>
    <svg class="i" viewBox="0 0 12 12"><path d="M2 2l4 4v4M7 3q5 0 2 6" fill="none" stroke="#b3dcf4" stroke-width="1.800"/></svg>
    <svg class="i" viewBox="0 0 12 12"><path d="M3 1l6 6-3 4-3-3z" fill="#c8dae8"/></svg><i class="drop"></i>
    <svg class="i" viewBox="0 0 12 12"><path d="M1 2h10v8H1z" fill="none" stroke="#82c6f4" stroke-width="1.600" stroke-dasharray="2 1"/></svg><i class="drop"></i>
    <svg class="i"><use href="#orbit"/></svg><i class="drop"></i><svg class="i"><use href="#pan"/></svg>
    <svg class="i" viewBox="0 0 12 12"><circle cx="5" cy="5" r="4" fill="#d6efff"/><path d="M8 8l3 3" stroke="#72bbee" stroke-width="2"/></svg><i class="drop"></i>
    <svg class="i" viewBox="0 0 12 12"><path d="M1 9l4-4 2 2 4-4" fill="none" stroke="#77bff2" stroke-width="3"/></svg>
    <svg class="i" viewBox="0 0 12 12"><path d="M1 9l4-4 2 2 4-4" fill="none" stroke="#7d94a8" stroke-width="2.400"/></svg>
  </div>
</div>

<footer class="taskbar">
  <div class="apps">
    <button aria-label="Start"><svg viewBox="0 0 14 14"><path d="M0 1h6v5H0zM7 1h6v5H7zM0 7h6v6H0zM7 7h6v6H7z" fill="#fff"/></svg></button>
    <button aria-label="Suche"><svg viewBox="0 0 14 14"><circle cx="8" cy="5" r="4" fill="none" stroke="#ddd" stroke-width="1.400"/><path d="M5 8l-4 5" stroke="#ddd" stroke-width="1.600"/></svg></button>
    <button aria-label="Aufgabenansicht"><svg viewBox="0 0 14 14"><path d="M3 3h8v7H3z" fill="#a8c8da"/><path d="M1 5v7h9" fill="none" stroke="#ddd" stroke-width="1.400"/></svg></button>
    <button class="run" aria-label="Explorer"><svg viewBox="0 0 14 14"><path d="M0 1h5l1 2h8v9H0z" fill="#f2cf65"/><path d="M3 8h8v4H3z" fill="#58a2c8"/></svg></button>
    <button aria-label="PC"><svg viewBox="0 0 14 14"><path d="M1 2h12v8H4v2H1z" fill="#3f8ccf"/></svg></button>
    <button class="run" aria-label="Firefox"><svg viewBox="0 0 14 14"><circle cx="7" cy="7" r="6" fill="#ed6923"/><circle cx="7" cy="6" r="3" fill="#733b9b"/><path d="M1 5l4-3" stroke="#ffd04b" stroke-width="2"/></svg></button>
    <button aria-label="Edge"><svg viewBox="0 0 14 14"><path d="M11 12q-8 1-8-6h9q0-5-5-5-5 0-6 5" fill="none" stroke="#288bd4" stroke-width="2.400"/></svg></button>
    <button aria-label="Blatt"><svg viewBox="0 0 14 14"><path d="M2 1h11v12H2z" fill="#d72c32"/><path d="M4 6h7v3H4z" fill="#fff"/></svg></button>
    <button aria-label="Werkzeug"><svg viewBox="0 0 14 14"><path d="M4 1h7v6H8v6H6V7H4z" fill="#ecb43c"/><path d="M5 3h5" stroke="#4c8f43" stroke-width="2"/></svg></button>
    <button aria-label="Xbox"><svg viewBox="0 0 14 14"><circle cx="7" cy="7" r="6" fill="#eee"/><path d="M3 11l4-5 4 5M3 3l4 2 4-2" fill="none" stroke="#444" stroke-width="1.600"/></svg></button>
    <button aria-label="Store"><svg viewBox="0 0 14 14"><path d="M1 4h12v9H1zM4 4V1h6v3" fill="#eee" stroke="#eee"/><path d="M5 7h4v4H5z" fill="#3c92ca"/></svg></button>
    <button aria-label="Mail"><svg viewBox="0 0 14 14"><path d="M1 3h12v9H1z" fill="#f2f2f2"/><path d="M1 3l6 5 6-5" fill="none" stroke="#555" stroke-width="1.400"/></svg></button>
    <button aria-label="Ring"><svg viewBox="0 0 14 14"><circle cx="7" cy="7" r="4" fill="none" stroke="#e65726" stroke-width="3"/></svg></button>
    <button aria-label="Steam"><svg viewBox="0 0 14 14"><circle cx="7" cy="7" r="6" fill="#174777"/><path d="M2 9l4 1 4-5" fill="none" stroke="#fff" stroke-width="2"/></svg></button>
    <button aria-label="Bild"><svg viewBox="0 0 14 14"><path d="M2 2h10v10H2z" fill="#e8d0b1"/><path d="M3 3l8 8" stroke="#d97032" stroke-width="3"/></svg></button>
    <button aria-label="Modell"><svg viewBox="0 0 14 14"><path d="M2 11V3h4v8M6 4q6-2 6 7" fill="none" stroke="#159094" stroke-width="2.400"/></svg></button>
    <button aria-label="Globus"><svg viewBox="0 0 14 14"><circle cx="7" cy="7" r="6" fill="#18747c"/><path d="M2 6h10M4 3q6 5 4 9" fill="none" stroke="#64b8b4"/></svg></button>
    <button class="run now" aria-label="DesignSpark"><svg viewBox="0 0 14 14"><use href="#logo"/></svg></button>
    <button class="run" aria-label="Cura"><svg viewBox="0 0 14 14"><path d="M1 1h12v12H1z" fill="#15a3d7"/><path d="M10 4q-6-2-6 3t6 3" fill="none" stroke="#fff" stroke-width="2"/></svg></button>
  </div>
  <div class="tray">
    <svg viewBox="0 0 12 12"><path d="M2 8l4-4 4 4" fill="none" stroke="#eee" stroke-width="1.400"/></svg>
    <svg viewBox="0 0 12 12"><path d="M1 11L11 1v10z" fill="#aaa"/></svg>
    <svg viewBox="0 0 12 12"><path d="M1 4h2l3-3v10L3 8H1zM8 4q2 2 0 4M10 2q3 4 0 8" fill="none" stroke="#eee"/></svg>
    <time>00:58</time>
    <svg class="note" viewBox="0 0 12 12"><path d="M1 1h10v8H7l-2 2-1-2H1z" fill="none" stroke="#eee" stroke-width="1.400"/></svg>
  </div>
</footer>
</body>
</html>
```

FILE: styles.css
```css
* { box-sizing: border-box; }
body {
  margin: 0;
  height: 100vh;
  display: flex;
  flex-direction: column;
  overflow: hidden;
  background: #f3f2f9;
  color: #1c1c1c;
  font: 4px/5px "Open Sans", "Liberation Sans", sans-serif;
}
h1, h2, h3, h4, p, ul { margin: 0; padding: 0; font: inherit; }
ul { list-style: none; }
button {
  margin: 0; padding: 0; border: 0;
  background: none; color: inherit; font: inherit;
  display: flex; align-items: center; gap: 1px;
  white-space: nowrap;
}
svg { display: block; flex: none; }
.defs { position: absolute; width: 0; height: 0; }
.i { width: 6px; height: 6px; }
.b { width: 12px; height: 12px; }
.m { width: 8px; height: 7px; }
.t { width: 6px; height: 6px; }
.w { width: 5px; height: 5px; }
.drop {
  border: 1px solid transparent;
  border-top-color: #555;
  border-bottom: 0;
  margin: 0 1px;
}
.pale { opacity: .4; }

.titlebar { display: grid; grid-template-columns: 1fr auto 1fr; align-items: center; height: 10px; flex: none; }
.titlebar h1 { color: #555; padding-left: 38px; }
.quick { display: flex; align-items: center; gap: 4px; padding-left: 1px; }
.quick button { gap: 2px; }
.bar { width: 1px; height: 5px; background: #ccc; }
.window { display: flex; justify-content: flex-end; gap: 5px; padding-right: 3px; }

.tabs { display: flex; height: 10px; flex: none; }
.tabs button { justify-content: center; padding: 0 4px; margin-right: 2px; color: #555; }
.tabs .file { background: #255b8a; color: #fff; width: 21px; margin: 0; }
.tabs .active { background: #f9f8ff; border: 1px solid #dcdce8; border-bottom: 0; color: #3878a8; margin-left: 1px; padding: 0 3px; }
.help { margin-left: auto; display: flex; align-items: center; gap: 5px; padding-right: 3px; }

.ribbon {
  display: grid;
  grid-template-columns: 36px 71px 67px 17px 92px 71px 92px 24px 39px 29px;
  height: 33px; flex: none;
  background: #f9f8ff;
  border: solid #dfdee8;
  border-width: 1px 0;
}
.group { display: flex; flex-direction: column; border-right: 1px solid #dddde8; padding: 1px 1px 0; }
.group h2 { text-align: center; height: 5px; white-space: nowrap; }
.tools { flex: 1; display: flex; justify-content: space-around; min-height: 0; }
.stack { display: grid; grid-template-rows: repeat(3, 8px); align-items: center; }
.stack.two { grid-template-rows: repeat(2, 11px); }
.blue { color: #2a6f9f; }
.blue span { color: #1c1c1c; }
.off { color: #aaa; }
.big { flex-direction: column; gap: 1px; padding-top: 1px; text-align: center; white-space: normal; line-height: 5px; }
.tools > .big { max-width: 26px; }
.low .b { margin-bottom: 3px; }
.mid { align-self: center; }
.on { background: #a9cdea; }
.sketch { display: grid; grid-template: repeat(3, 8px) / repeat(7, 1fr); justify-items: center; }
.edit .on { align-self: stretch; padding: 1px 1px 0; }
.three { font: bold 9px/12px "Liberation Sans", sans-serif; color: #d01820; }

.main { flex: 1; min-height: 0; display: flex; gap: 1px; }
.rail { width: 10px; writing-mode: vertical-rl; display: flex; gap: 2px; align-items: center; padding-top: 3px; }
.side { width: 86px; display: flex; flex-direction: column; background: #fff; }
.side h3 { display: flex; justify-content: space-between; height: 8px; line-height: 8px; padding: 0 2px 0 1px; background: #f3f2f9; }
.structure { flex: 3; min-height: 0; }
.tree { display: grid; grid-auto-rows: 1fr; height: 148px; padding: 0 0 0 10px; margin-top: 1px; }
.tree li { display: flex; align-items: center; position: relative; }
.tree .root { margin-left: -7px; font-weight: bold; }
.tree label { display: flex; align-items: center; gap: 1px; margin-left: 5px; }
.tree .t { margin-right: 1px; }
.tree i { position: absolute; left: 0; border: 1px solid transparent; border-left: 2px solid #999; border-right: 0; }
.tree .open { border: 1px solid #555; border-width: 0 1px 1px 0; width: 2px; height: 2px; }
.italic { font-style: italic; }
input[type="checkbox"] {
  appearance: none;
  width: 5px; height: 5px; margin: 0; flex: none;
  border: 1px solid #bbb; background: #fff;
}
.tree input[type="checkbox"] { border-color: #ccc; background: linear-gradient(135deg, #fff 30%, #444 50%, #fff 70%); }
.options { flex: 2; min-height: 0; display: flex; flex-direction: column; }
.options h4 { display: flex; align-items: center; gap: 2px; height: 8px; padding-left: 1px; background: #f9f8fd; }
.icons { display: flex; gap: 3px; padding: 4px 3px 2px; }
.icons .gap { margin-left: 3px; }
.options label { display: flex; align-items: center; gap: 2px; height: 8px; padding-left: 3px; white-space: nowrap; }
.options input[type="checkbox"].fill { background: #255b9a; border-color: #255b9a; }
.save { display: flex; gap: 3px; align-items: center; height: 8px; padding-left: 3px; color: #888; }
.save button { color: #1c1c1c; gap: 2px; }
.foot { display: flex; margin-top: auto; height: 9px; background: #f3f2f9; color: #777; }
.foot button { padding: 0 1px; }
.foot .active { background: #fff; color: #3878a8; border-right: 1px solid #ddd; }

.work { flex: 1; min-width: 0; display: flex; flex-direction: column; padding: 2px 1px 0 2px; }
.canvas { flex: 1; min-height: 0; position: relative; background: #fff; border: 1px solid #d8d8c8; }
.model { position: absolute; inset: 0; width: 100%; height: 100%; }
.hint { position: relative; padding: 3px; color: #777; font-family: "DejaVu Sans", sans-serif; white-space: nowrap; }
.palette {
  position: absolute; left: 4px; top: 12px;
  display: grid; grid-template: 18px 17px 23px 23px 23px / 15px 18px;
}
.palette button { width: 12px; height: 12px; justify-content: center; align-self: end; border: 1px solid #ccc; border-radius: 2px; background: #fff; }
.palette svg { width: 9px; height: 9px; }
.palette .lead { width: 18px; height: 18px; border-color: #aaa; border-radius: 4px; }
.palette .lead svg { width: 12px; height: 13px; }
.palette .lead + button { justify-self: end; align-self: start; }
.palette .ghost { opacity: .5; }
.palette .dark { background: none; border-color: #5d6468; }
.palette .faint { background: none; border: 0; opacity: .5; }
.scale { position: absolute; right: 5px; bottom: 3px; width: 24px; text-align: center; color: #44d; border-top: 1px solid #88e; }
.docs { height: 10px; display: flex; align-items: center; padding-left: 1px; color: #666; }
.docs button { height: 8px; padding: 0 2px; gap: 2px; }
.docs .active { background: #fff; border: 1px solid #ccd; color: #3878a8; }
.docs span { margin-left: auto; color: #999; }

.status { height: 12px; flex: none; display: grid; grid-template-columns: 444px 25px 56px 1fr; align-items: center; background: #2b5c8a; color: #fff; }
.status p { padding-left: 3px; font-family: "Liberation Sans", sans-serif; white-space: nowrap; }
.status .drop { border-top-color: #cde; }
.info { height: 10px; display: flex; align-items: center; gap: 1px; padding-left: 11px; border: solid #5681a6; border-width: 0 1px; }
.cell { height: 10px; border-right: 1px solid #5681a6; }
.viewtools { display: flex; align-items: center; justify-content: flex-end; gap: 3px; padding-right: 7px; color: #79bdef; }

.taskbar { height: 11px; flex: none; display: flex; justify-content: space-between; background: linear-gradient(90deg, #17150f 0 60%, #2a150f 67%, #0f1820 78%, #29261a 88%); color: #fff; }
.apps { display: grid; grid-template-columns: repeat(19, 1fr); width: 260px; }
.apps button { justify-content: center; border-bottom: 1px solid transparent; }
.apps svg { width: 7px; height: 7px; }
.apps .run { border-bottom-color: #62b3ac; }
.apps .now { background: #55524c; }
.tray { display: flex; align-items: center; gap: 3px; padding-right: 8px; }
.tray svg { width: 6px; height: 6px; }
.tray .note { margin-left: 4px; }
```
